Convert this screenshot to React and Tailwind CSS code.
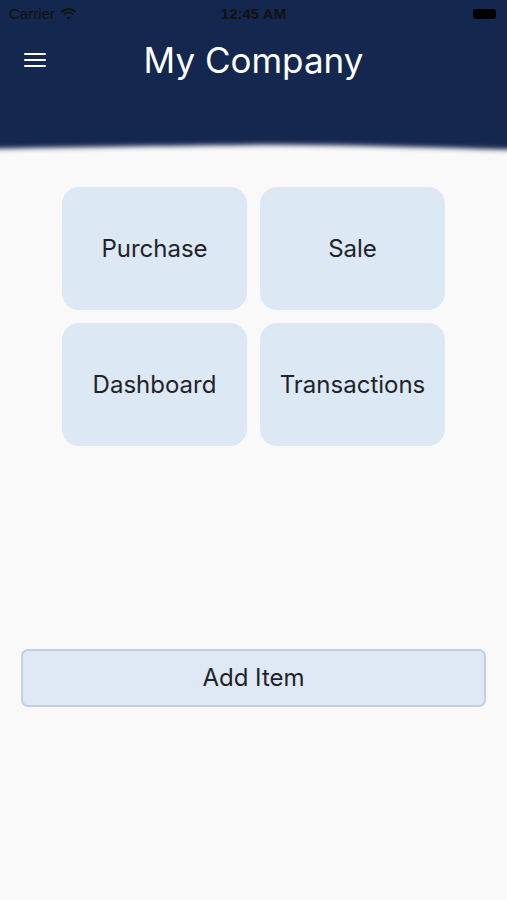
import React from 'react';

const font = { fontFamily: 'Inter, "Noto Sans", sans-serif' };
const sys = { fontFamily: '"Liberation Sans", Arial, sans-serif' };

const Wifi = () => (
  <svg width="17" height="12" viewBox="0 0 17 12" className="ml-[5px]">
    <path d="M8.5 2.2c2.5 0 4.8 1 6.5 2.6l1.3-1.4C14.3 1.5 11.5.3 8.5.3S2.7 1.5.7 3.4L2 4.8c1.7-1.6 4-2.6 6.5-2.6z" fill="#111" />
    <path d="M8.5 5.6c1.6 0 3 .6 4.1 1.6l1.3-1.4C12.5 4.5 10.6 3.7 8.5 3.7S4.5 4.5 3.1 5.8l1.3 1.4c1.1-1 2.5-1.6 4.1-1.6z" fill="#111" />
    <path d="M8.5 8.9c.8 0 1.4.3 1.9.7L8.5 11.7 6.6 9.6c.5-.4 1.1-.7 1.9-.7z" fill="#111" />
  </svg>
);

// soft wavy edge under the header
const Wave = () => (
  <svg width="507" height="20" viewBox="0 0 507 20" preserveAspectRatio="none" className="block w-full">
    <defs>
      <filter id="blur" x="-10%" y="-50%" width="120%" height="200%">
        <feGaussianBlur stdDeviation="2.4" />
      </filter>
    </defs>
    <path d="M-20 -10 H527 V11 C430 9 330 5 248 6 C160 7 80 8 -20 10 Z" fill="#14274f" filter="url(#blur)" />
  </svg>
);

const Tile = ({ label }) => (
  <button className="h-[123px] rounded-[17px] bg-[#dde8f5] text-[24px] text-[#1f2328] flex items-center justify-center">
    {label}
  </button>
);

const App = () => {
  return (
    <div className="w-[507px] h-[900px] bg-[#f9f9f9] overflow-hidden" style={font}>
      <div className="bg-[#14274f] h-[140px] flex flex-col">
        <div className="h-[28px] flex items-center justify-between px-[9px] text-[#111]" style={sys}>
          <div className="flex items-center w-[100px]">
            <span className="text-[15px]">Carrier</span>
            <Wifi />
          </div>
          <span className="font-semibold text-[15px]">12:45 AM</span>
          <div className="w-[100px] flex justify-end pr-[2px]">
            <div className="w-[23px] h-[10px] rounded-[3px] bg-black" />
          </div>
        </div>
        <div className="flex items-center h-[64px] pl-[24px]">
          <div className="flex flex-col gap-[4px] w-[22px]">
            <div className="h-[2px] bg-white rounded" />
            <div className="h-[2px] bg-white rounded" />
            <div className="h-[2px] bg-white rounded" />
          </div>
          <div className="flex-1 text-center text-white text-[35px] pr-[46px] leading-none">My Company</div>
        </div>
      </div>
      <div className="-mt-px">
        <Wave />
      </div>
      <div className="grid grid-cols-2 gap-[13px] w-[383px] mx-auto mt-[28px]">
        <Tile label="Purchase" />
        <Tile label="Sale" />
        <Tile label="Dashboard" />
        <Tile label="Transactions" />
      </div>
      <div className="px-[21px] mt-[203px]">
        <button className="w-full h-[58px] rounded-[7px] border-2 border-[#c3cfdb] bg-[#dfe9f5] text-[24px] text-[#1f2328] flex items-center justify-center">
          Add Item
        </button>
      </div>
    </div>
  );
};

export default App;
